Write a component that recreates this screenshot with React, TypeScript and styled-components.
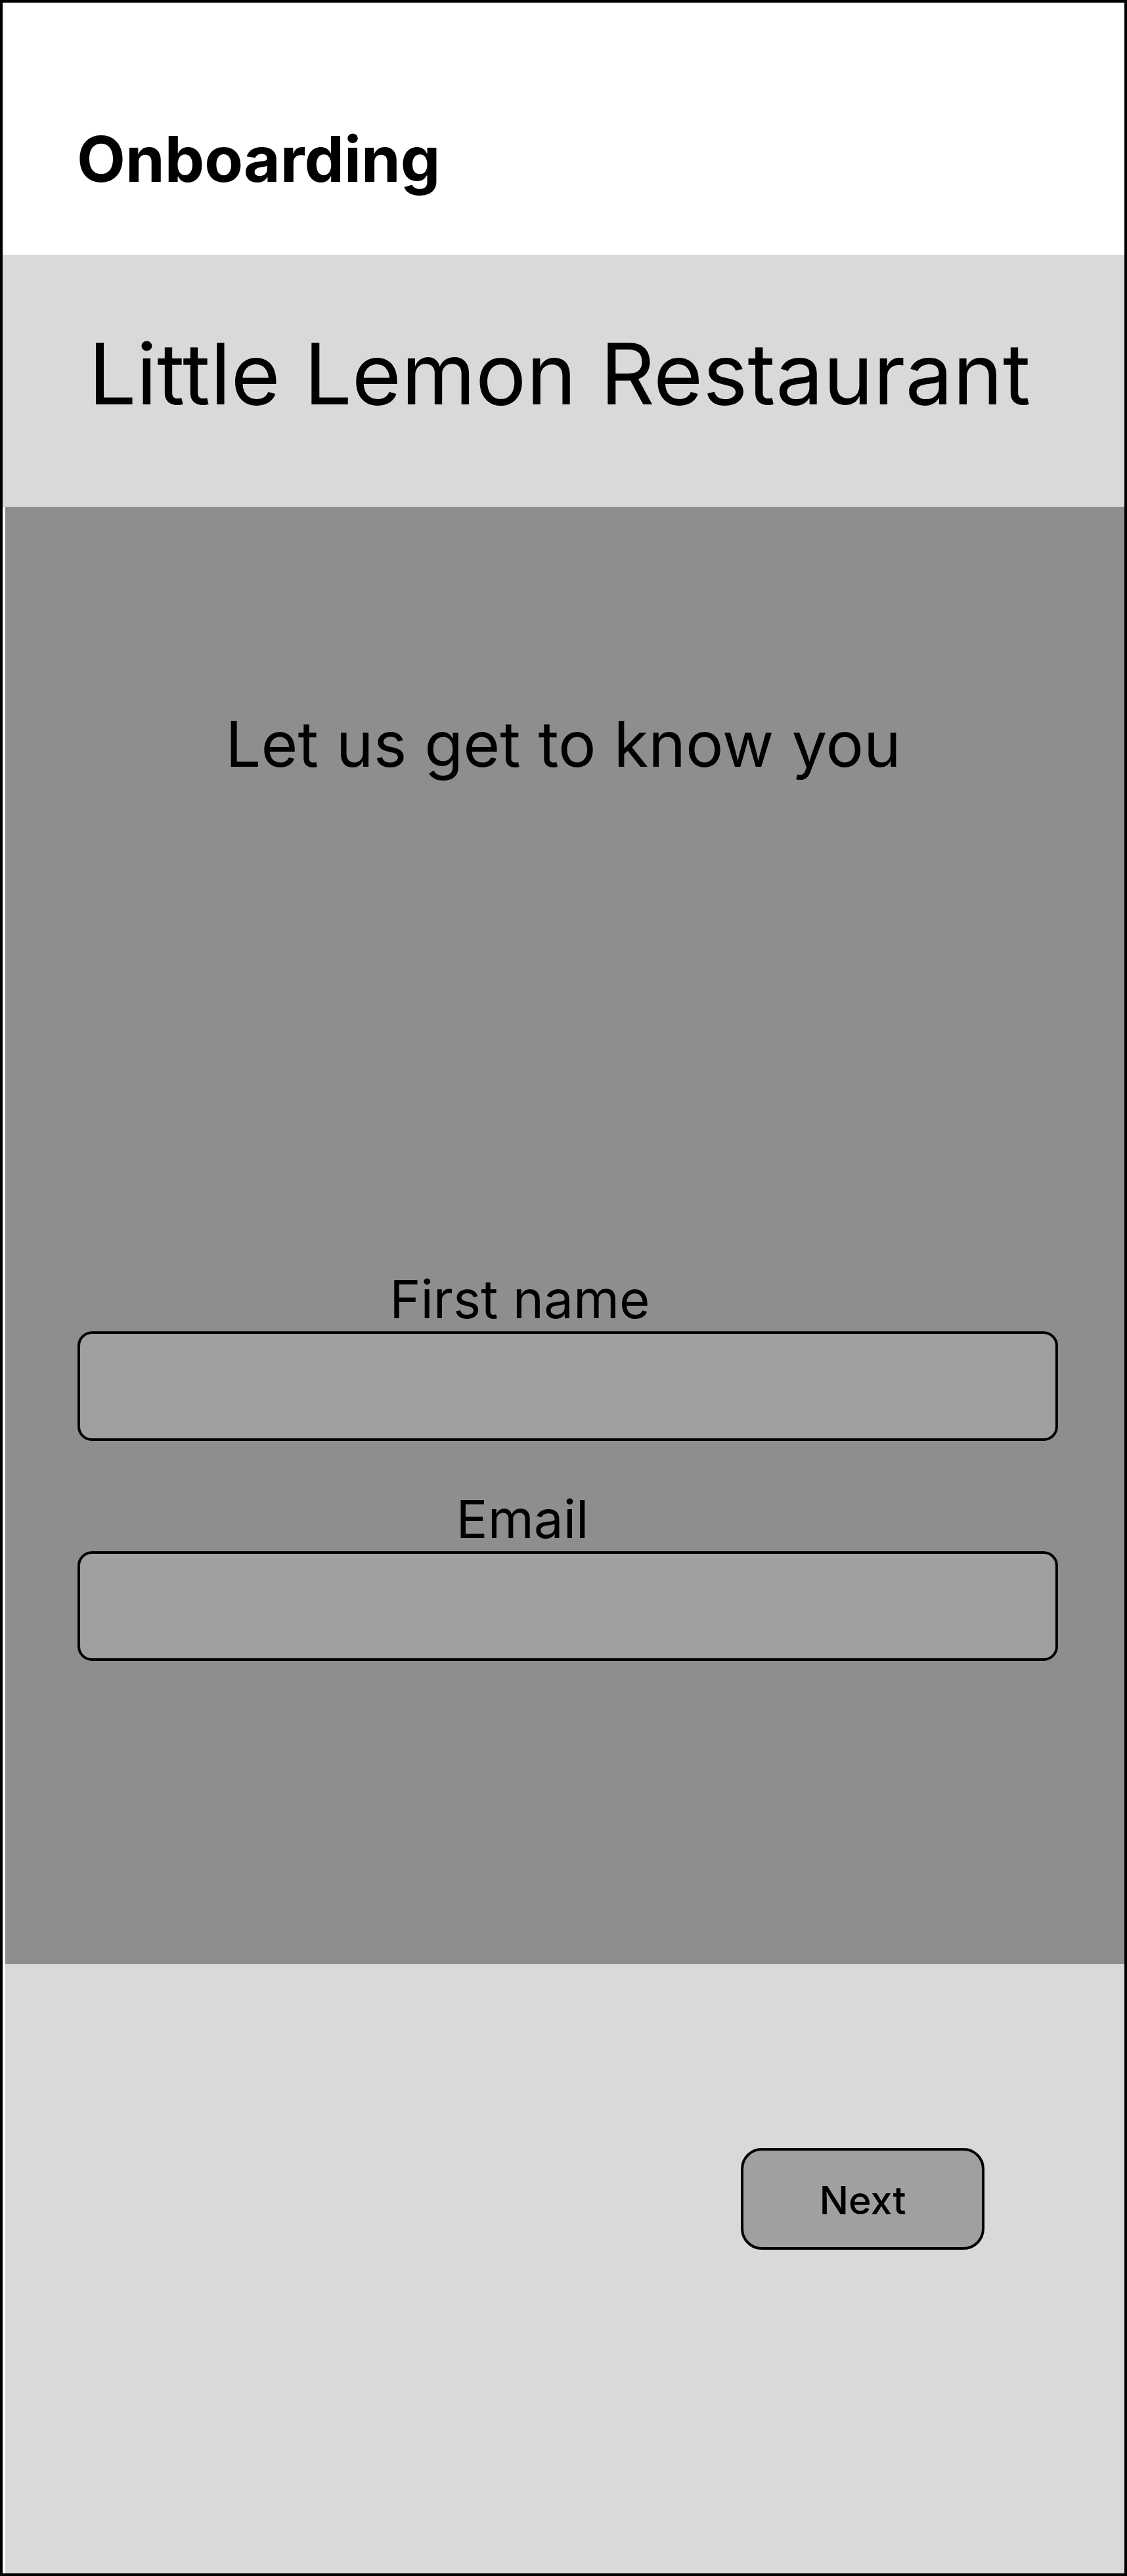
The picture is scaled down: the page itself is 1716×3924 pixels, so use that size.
import React from 'react';
import styled, { createGlobalStyle } from 'styled-components';

const GlobalStyle = createGlobalStyle`
    html, body {
        margin: 0;
        padding: 0;
        background: #ffffff;
    }
    * {
        box-sizing: border-box;
    }
`;

const Frame = styled.div`
    width: 1716px;
    height: 3924px;
    border: 4px solid #000;
    background: #fff;
    display: flex;
    flex-direction: column;
    font-family: Inter, 'Noto Sans', sans-serif;
    color: #000;
`;

const Header = styled.header`
    height: 384px;
    padding: 190px 0 0 113px;
    background: #fff;
`;

const Title = styled.h1`
    margin: 0;
    font-size: 96px;
    font-weight: 700;
    line-height: 1;
`;

const Hero = styled.section`
    height: 384px;
    padding: 117px 12px 0 0;
    background: #d9d9d9;
    text-align: center;
`;

const RestaurantName = styled.h2`
    margin: 0;
    font-size: 129px;
    font-weight: 400;
    line-height: 1;
`;

const FormPanel = styled.section`
    height: 2220px;
    margin-left: 4px;
    padding: 313px 101px 0 110px;
    background: #8e8e8e;
    display: flex;
    flex-direction: column;
`;

const Intro = styled.h3`
    margin: 0 0 758px;
    padding-right: 14px;
    font-size: 96px;
    font-weight: 400;
    line-height: 1;
    text-align: center;
`;

const Fields = styled.div`
    display: flex;
    flex-direction: column;
    gap: 79px;
`;

const Field = styled.label`
    display: flex;
    flex-direction: column;
    gap: 9px;
`;

const FieldLabel = styled.span<{ $offset: number }>`
    padding-right: ${(p) => p.$offset}px;
    font-size: 80px;
    line-height: 1;
    text-align: center;
`;

const TextInput = styled.input`
    height: 167px;
    width: 100%;
    border: 4px solid #000;
    border-radius: 22px;
    background: #a19f9f;
    font-family: inherit;
    font-size: 60px;
    padding: 0 32px;
    outline: none;
`;

const Footer = styled.footer`
    flex: 1;
    margin-left: 4px;
    padding: 280px 213px 0 0;
    background: #d9d9d9;
    display: flex;
    justify-content: flex-end;
    align-items: flex-start;
`;

const NextButton = styled.button`
    width: 371px;
    height: 155px;
    border: 4px solid #000;
    border-radius: 32px;
    background: #a19f9f;
    font-family: inherit;
    font-size: 59px;
    font-weight: 500;
    color: #000;
    padding: 4px 0 0;
    cursor: pointer;
`;

const fields = [
    { name: 'First name', type: 'text', offset: 146 },
    { name: 'Email', type: 'email', offset: 138 },
];

const App = () => {
    return (
        <>
            <GlobalStyle />
            <Frame>
                <Header>
                    <Title>Onboarding</Title>
                </Header>
                <Hero>
                    <RestaurantName>Little Lemon Restaurant</RestaurantName>
                </Hero>
                <FormPanel>
                    <Intro>Let us get to know you</Intro>
                    <Fields>
                        {fields.map((field) => (
                            <Field key={field.name}>
                                <FieldLabel $offset={field.offset}>{field.name}</FieldLabel>
                                <TextInput type={field.type} />
                            </Field>
                        ))}
                    </Fields>
                </FormPanel>
                <Footer>
                    <NextButton>Next</NextButton>
                </Footer>
            </Frame>
        </>
    );
};

export default App;
